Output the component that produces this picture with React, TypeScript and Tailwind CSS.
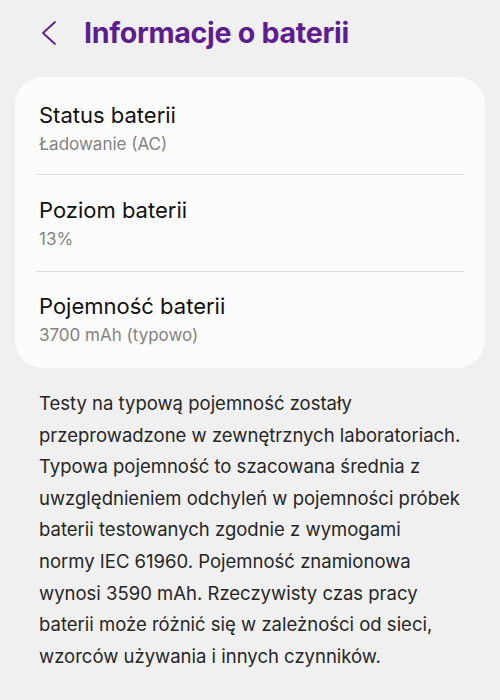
import React from "react";

const rows = [
  { title: "Status baterii", value: "Ładowanie (AC)" },
  { title: "Poziom baterii", value: "13%" },
  { title: "Pojemność baterii", value: "3700 mAh (typowo)" },
];

const lines = [
  "Testy na typową pojemność zostały",
  "przeprowadzone w zewnętrznych laboratoriach.",
  "Typowa pojemność to szacowana średnia z",
  "uwzględnieniem odchyleń w pojemności próbek",
  "baterii testowanych zgodnie z wymogami",
  "normy IEC 61960. Pojemność znamionowa",
  "wynosi 3590 mAh. Rzeczywisty czas pracy",
  "baterii może różnić się w zależności od sieci,",
  "wzorców używania i innych czynników.",
];

export default function App() {
  return (
    <div
      className="w-[500px] h-[700px] bg-[#f0f0f0] overflow-hidden"
      style={{ fontFamily: "Inter, 'Noto Sans', sans-serif" }}
    >
      <div className="flex items-center h-[66px] pl-[40px]">
        <svg width="18" height="26" viewBox="0 0 18 26" className="shrink-0">
          <path d="M15 2 L3 13 L15 24" fill="none" stroke="#5b1f87" strokeWidth="1.8" strokeLinecap="round" strokeLinejoin="round" />
        </svg>
        <h1 className="ml-[26px] text-[28.6px] font-bold text-[#5e1d8e] tracking-[-0.3px]">Informacje o baterii</h1>
      </div>
      <div className="mx-[15px] mt-[11px] bg-[#fcfcfc] rounded-[28px] px-[21px]">
        {rows.map((r, i) => (
          <div key={r.title}>
            {i > 0 && <div className="h-px bg-[#dedede]" />}
            <div className={`pl-[3px] h-[96px] flex flex-col justify-center ${i === 0 ? "h-[97px] pt-[4px]" : i === 2 ? "h-[95px] pb-[2px]" : ""}`}>
              <div className="text-[22px] leading-[30px] text-[#111]">{r.title}</div>
              <div className="text-[17px] leading-[24px] text-[#838383] mt-[2px]">{r.value}</div>
            </div>
          </div>
        ))}
      </div>
      <p className="px-[39px] pt-[20px] text-[18.5px] leading-[31.6px] text-[#262626]">
        {lines.map((l, i) => (
          <span key={i} className="block whitespace-nowrap">{l}</span>
        ))}
      </p>
    </div>
  );
}
